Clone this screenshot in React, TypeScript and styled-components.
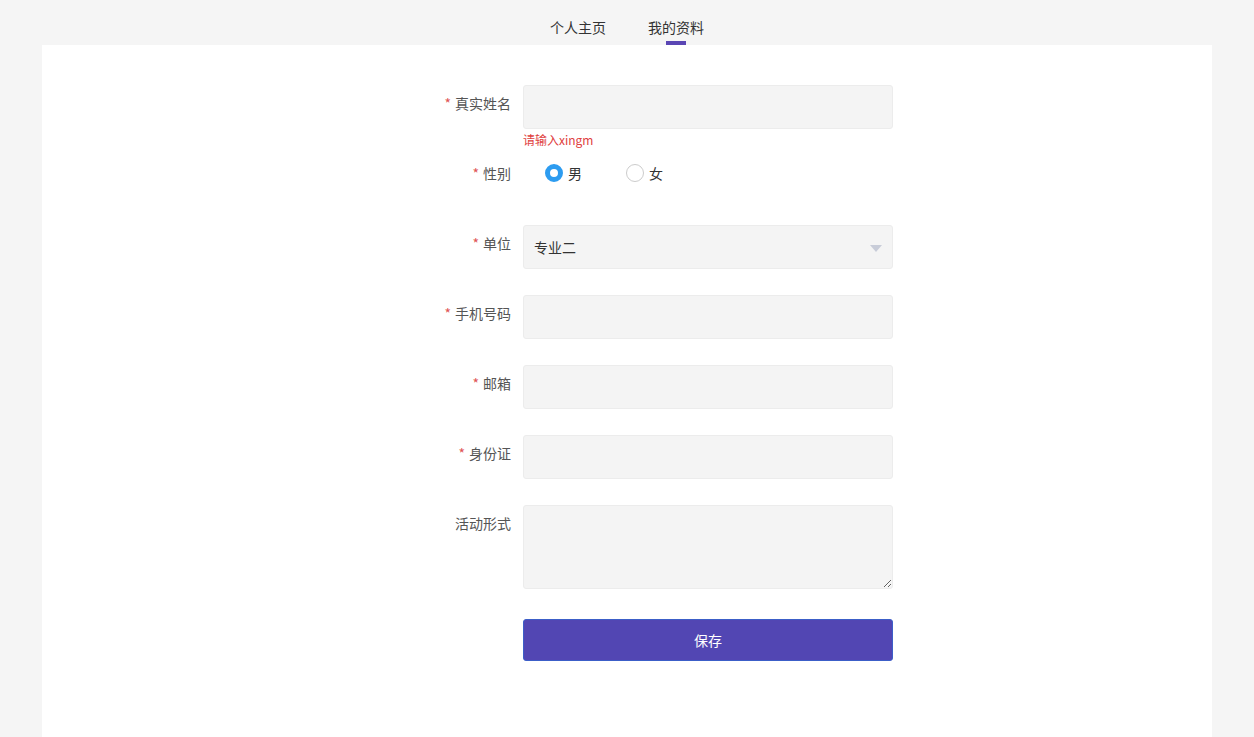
import React from "react";
import styled, { createGlobalStyle } from "styled-components";

const Global = createGlobalStyle`
  body { margin: 0; background: #f5f5f5; font-family: "Microsoft YaHei", "Noto Sans CJK SC", sans-serif; }
`;
const Page = styled.div`min-height: 737px; display: flex; flex-direction: column; align-items: center;`;
const Tabs = styled.div`height: 45px; display: flex; gap: 42px; justify-content: center;`;
const Tab = styled.div<{ $active?: boolean }>`
  position: relative; font-size: 14px; color: #333; line-height: 54px; height: 45px;
  &::after { content: ""; display: ${p => (p.$active ? "block" : "none")}; position: absolute; left: 50%; bottom: 0;
    width: 20px; height: 4px; margin-left: -10px; background: #5a46b4; }
`;
const Card = styled.div`width: 1170px; background: #fff; flex: 1; padding-top: 40px; min-height: 652px; box-sizing: border-box;`;
const Form = styled.div`width: 862px; display: flex; flex-direction: column;`;
const Row = styled.div<{ $gap?: number; $h?: number }>`
  display: flex; margin-bottom: ${p => p.$gap ?? 26}px; ${p => (p.$h ? `height:${p.$h}px;align-items:center;` : "")}
`;
const Label = styled.div<{ $center?: boolean }>`
  width: 481px; padding-right: 12px; box-sizing: border-box; text-align: right; font-size: 14px; color: #555;
  line-height: ${p => (p.$center ? "20px" : "36px")}; flex-shrink: 0;
`;
const Star = styled.span`color: #e05555; margin-right: 4px;`;
const Field = styled.div`width: 370px; display: flex; flex-direction: column;`;
const Input = styled.div`height: 44px; box-sizing: border-box; background: #f4f4f4; border: 1px solid #ececec; border-radius: 3px;
  display: flex; align-items: center; padding: 0 10px; font-size: 14px; color: #333; position: relative;`;
const Area = styled.textarea`height: 84px; box-sizing: border-box; background: #f4f4f4; border: 1px solid #ececec; border-radius: 3px; resize: vertical; display:block;`;
const Err = styled.div`font-size: 12px; color: #e04040; line-height: 22px; height: 22px; padding-top: 0;`;
const Caret = styled.span`position: absolute; right: 10px; top: 19px; border: 6px solid transparent; border-top: 7px solid #c8ccd8; border-bottom: 0;`;
const Radios = styled.div`display: flex; gap: 44px; padding-left: 22px;`;
const Radio = styled.label`display: flex; align-items: center; gap: 5px; font-size: 14px; color: #333;`;
const Dot = styled.span<{ $on?: boolean }>`
  width: 18px; height: 18px; border-radius: 50%; box-sizing: border-box;
  border: ${p => (p.$on ? "5px solid #2d9cf0" : "1px solid #ccc")}; background: #fff;
`;
const Button = styled.button`width: 370px; height: 42px; background: #5246b3; border: 1px solid #3c5ec8; border-radius: 3px;
  color: #fff; font-size: 14px; font-family: inherit;`;

const fields = ["手机号码", "邮箱", "身份证"];

export default function App() {
  return (
    <Page>
      <Global />
      <Tabs><Tab>个人主页</Tab><Tab $active>我的资料</Tab></Tabs>
      <Card>
        <Form>
          <Row $gap={0}>
            <Label><Star>*</Star>真实姓名</Label>
            <Field><Input /><Err>请输入xingm</Err></Field>
          </Row>
          <Row $h={44} $gap={30}>
            <Label $center><Star>*</Star>性别</Label>
            <Radios><Radio><Dot $on />男</Radio><Radio><Dot />女</Radio></Radios>
          </Row>
          <Row>
            <Label><Star>*</Star>单位</Label>
            <Field><Input>专业二<Caret /></Input></Field>
          </Row>
          {fields.map(f => (
            <Row key={f}><Label><Star>*</Star>{f}</Label><Field><Input /></Field></Row>
          ))}
          <Row $gap={30}><Label>活动形式</Label><Field><Area /></Field></Row>
          <Row><Label /><Button>保存</Button></Row>
        </Form>
      </Card>
    </Page>
  );
}
